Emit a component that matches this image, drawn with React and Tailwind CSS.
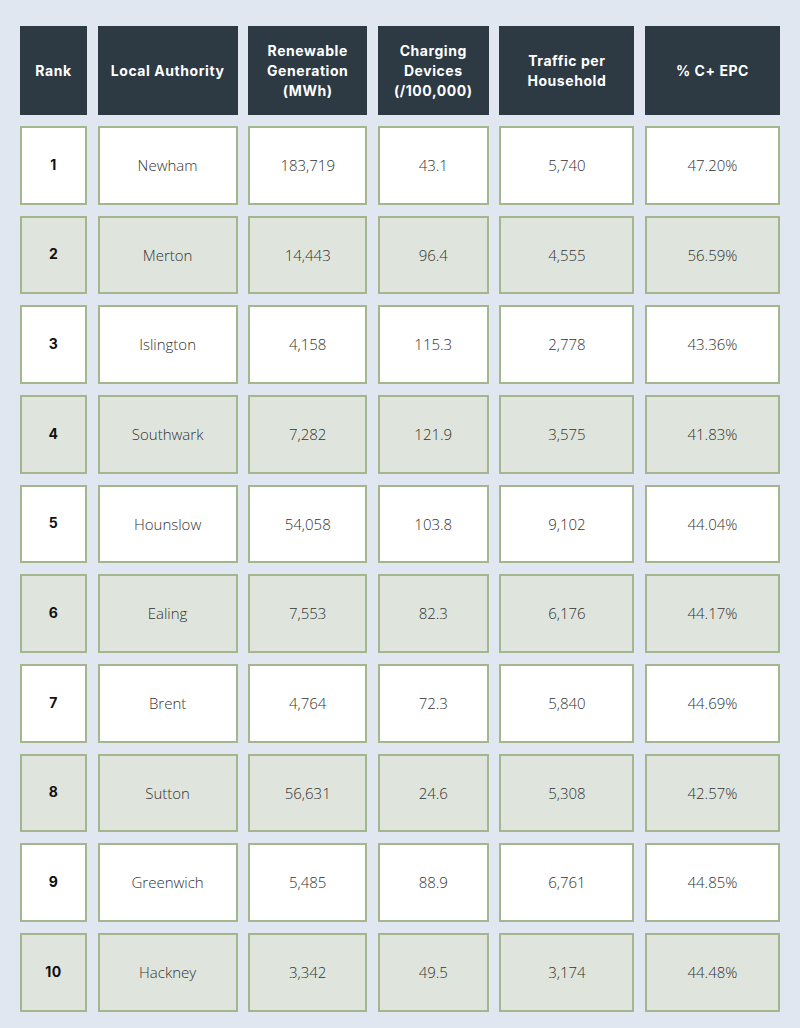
const rows = [
  ["1", "Newham", "183,719", "43.1", "5,740", "47.20%"],
  ["2", "Merton", "14,443", "96.4", "4,555", "56.59%"],
  ["3", "Islington", "4,158", "115.3", "2,778", "43.36%"],
  ["4", "Southwark", "7,282", "121.9", "3,575", "41.83%"],
  ["5", "Hounslow", "54,058", "103.8", "9,102", "44.04%"],
  ["6", "Ealing", "7,553", "82.3", "6,176", "44.17%"],
  ["7", "Brent", "4,764", "72.3", "5,840", "44.69%"],
  ["8", "Sutton", "56,631", "24.6", "5,308", "42.57%"],
  ["9", "Greenwich", "5,485", "88.9", "6,761", "44.85%"],
  ["10", "Hackney", "3,342", "49.5", "3,174", "44.48%"],
];

const headers = [
  ["Rank"],
  ["Local Authority"],
  ["Renewable", "Generation", "(MWh)"],
  ["Charging", "Devices", "(/100,000)"],
  ["Traffic per", "Household"],
  ["% C+ EPC"],
];

export default function App() {
  return (
    <div className="w-[800px] h-[1028px] bg-[#e0e7f0] pt-[26px] pl-[20px]">
      <div className="grid grid-cols-[67px_140px_119px_111px_135px_135px] gap-x-[10.6px] gap-y-[11px] grid-rows-[89px]">
        {headers.map((h, i) => (
          <div
            key={i}
            className="h-[89px] bg-[#2d3943] flex flex-col items-center justify-center text-white font-bold text-[14px] leading-[20px] tracking-[0.04em] text-center"
            style={{fontFamily: "Inter, 'Open Sans', sans-serif"}}>
            {h.map((line) => (
              <span key={line}>{line}</span>
            ))}
          </div>
        ))}
        {rows.map((r, ri) =>
          r.map((cell, ci) => (
            <div
              key={ri + "-" + ci}
              className={`h-[78.67px] border-2 border-[#a4b68c] flex items-center justify-center ${
                ri % 2 === 0 ? "bg-white" : "bg-[#dfe5dc]"
              } ${
                ci === 0
                  ? "font-bold text-[14px] text-[#111] pb-[2px] tracking-[0.03em]"
                  : "font-light text-[15px] text-[#333]"
              }`}
              style={{
                fontFamily:
                  ci === 0 ? "Inter, 'Open Sans', sans-serif" : "'Open Sans', sans-serif",
              }}>
              {cell}
            </div>
          ))
        )}
      </div>
    </div>
  );
}
